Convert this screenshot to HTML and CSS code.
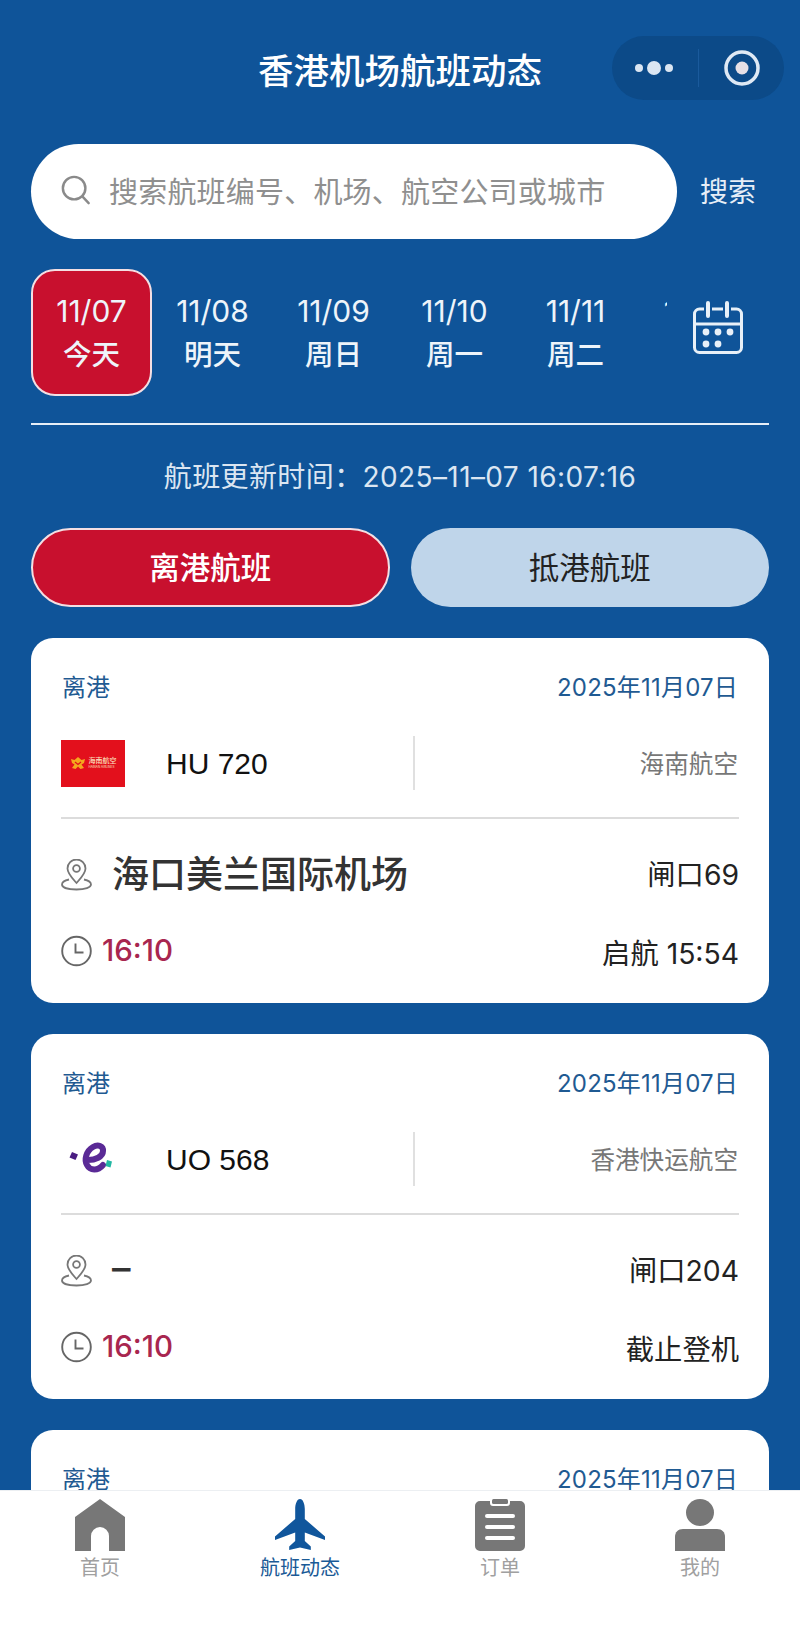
FILE: index.html
```html
<!DOCTYPE html>
<html lang="zh-CN">
<head>
  <meta charset="UTF-8" />
  <meta name="viewport" content="width=device-width, initial-scale=1.0"/>
  <title>香港机场航班动态</title>
  <link rel="stylesheet" href="styles.css">
</head>
<body>

<header class="topbar">
  香港机场航班动态
  <div class="capsule">
    <svg class="capsule-more" viewBox="0 0 44 16">
      <circle cx="7" cy="8" r="4"/>
      <circle cx="22" cy="8" r="7"/>
      <circle cx="37" cy="8" r="4"/>
    </svg>
    <span class="capsule-line"></span>
    <svg class="capsule-close" viewBox="0 0 38 38">
      <circle cx="19" cy="19" r="16" fill="none" stroke="#dfe9f5" stroke-width="3.5"/>
      <circle cx="19" cy="19" r="6.5" fill="#e6e0e6"/>
    </svg>
  </div>
</header>

<div class="search-row">
  <div class="search-box">
    <svg class="search-icon" viewBox="0 0 32 32">
      <circle cx="14" cy="14" r="12" fill="none" stroke="#8a8a8a" stroke-width="2.6"/>
      <path d="M23 23l6.5 7" fill="none" stroke="#8a8a8a" stroke-width="2.6" stroke-linecap="round"/>
    </svg>
    <span class="search-hint">搜索航班编号、机场、航空公司或城市</span>
  </div>
  <span class="search-btn">搜索</span>
</div>

<div class="date-row">
  <div class="date-list">
    <div class="date-item active"><span class="date-num">11/07</span><span>今天</span></div>
    <div class="date-item"><span class="date-num">11/08</span><span>明天</span></div>
    <div class="date-item"><span class="date-num">11/09</span><span>周日</span></div>
    <div class="date-item"><span class="date-num">11/10</span><span>周一</span></div>
    <div class="date-item"><span class="date-num">11/11</span><span>周二</span></div>
    <div class="date-item"><span class="date-num">11/12</span><span>周三</span></div>
  </div>
  <svg class="calendar" viewBox="0 0 50 53">
    <rect x="1.5" y="8" width="47" height="43.5" rx="5" fill="none" stroke="#e8f0f8" stroke-width="3"/>
    <path d="M1.5 23h47" stroke="#e8f0f8" stroke-width="3"/>
    <rect x="11" y="1" width="8" height="16" rx="4" fill="#0f5499"/>
    <rect x="30" y="1" width="8" height="16" rx="4" fill="#0f5499"/>
    <path d="M15 2v13M34 2v13" stroke="#e8f0f8" stroke-width="4" stroke-linecap="round"/>
    <g fill="#e8f0f8">
      <circle cx="13" cy="31" r="3.4"/>
      <circle cx="25" cy="31" r="3.4"/>
      <circle cx="37" cy="31" r="3.4"/>
      <circle cx="13" cy="43" r="3.4"/>
      <circle cx="25" cy="43" r="3.4"/>
    </g>
  </svg>
</div>

<div class="row-line"></div>

<p class="update-time">航班更新时间：2025–11–07 16:07:16</p>

<div class="tabs">
  <div class="tab active">离港航班</div>
  <div class="tab">抵港航班</div>
</div>

<main class="cards">
  <section class="card">
    <div class="card-head"><span>离港</span><span class="card-date">2025年11月07日</span></div>
    <div class="flight">
      <div class="logo-hainan">
        <svg viewBox="0 0 16 14">
          <path d="M1 3l3.5 1L8 1l3.5 3L15 3l-1 4-2.5 1.5L14 12l-3.5 1L8 10.5 5.5 13 2 12l2.500-3.500L2 7z" fill="#f4a81e"/>
          <path d="M5 6l3 2.500L11 6" fill="none" stroke="#e3101c" stroke-width="1.200"/>
        </svg>
        <div class="logo-text"><b>海南航空</b><i>HAINAN AIRLINES</i></div>
      </div>
      <div class="flight-no">HU 720</div>
      <div class="airline">海南航空</div>
    </div>
    <div class="card-line"></div>
    <div class="place">
      <svg class="icon" viewBox="0 0 31 32">
        <path d="M15.5 24C11 19 6.5 14.5 6.5 9.5a9 9 0 0 1 18 0C24.500 14.500 20 19 15.500 24z" fill="none" stroke="#777" stroke-width="1.800"/>
        <circle cx="15.500" cy="9.500" r="3.400" fill="none" stroke="#777" stroke-width="1.800"/>
        <path d="M8 20.500C3.500 21.500 1 23.500 1 25.500c0 3 6 5 14.500 5s14.500-2 14.500-5c0-2-2.500-4-7-5" fill="none" stroke="#777" stroke-width="1.800"/>
      </svg>
      <span class="place-name">海口美兰国际机场</span>
      <span class="gate">闸口69</span>
    </div>
    <div class="times">
      <svg class="icon" viewBox="0 0 31 31">
        <circle cx="15.500" cy="15.500" r="14.300" fill="none" stroke="#666" stroke-width="1.900"/>
        <path d="M14.500 8v9h8" fill="none" stroke="#666" stroke-width="1.900"/>
      </svg>
      <span class="time">16:10</span>
      <span class="status">启航 15:54</span>
    </div>
  </section>

  <section class="card">
    <div class="card-head"><span>离港</span><span class="card-date">2025年11月07日</span></div>
    <div class="flight">
      <svg class="logo-express" viewBox="0 0 64 48">
        <path d="M11 17l6 2.500-2.500 5.500-6-2.500z" fill="#4a1d82"/>
        <path d="M27 25c7 0 15-3 15-9 .4-5-5-7-10-4-7 4-9 13-6 18 3 6 11 6 16 0" fill="none" stroke="#5a2a96" stroke-width="6" stroke-linecap="round"/>
        <path d="M46 25l5 1.500-1.500 6-5-1.500z" fill="#22b8a4"/>
      </svg>
      <div class="flight-no">UO 568</div>
      <div class="airline">香港快运航空</div>
    </div>
    <div class="card-line"></div>
    <div class="place">
      <svg class="icon" viewBox="0 0 31 32">
        <path d="M15.500 24C11 19 6.500 14.500 6.500 9.500a9 9 0 0 1 18 0C24.500 14.500 20 19 15.500 24z" fill="none" stroke="#777" stroke-width="1.800"/>
        <circle cx="15.500" cy="9.500" r="3.400" fill="none" stroke="#777" stroke-width="1.800"/>
        <path d="M8 20.500C3.500 21.500 1 23.500 1 25.500c0 3 6 5 14.500 5s14.500-2 14.500-5c0-2-2.500-4-7-5" fill="none" stroke="#777" stroke-width="1.800"/>
      </svg>
      <span class="place-name">–</span>
      <span class="gate">闸口204</span>
    </div>
    <div class="times">
      <svg class="icon" viewBox="0 0 31 31">
        <circle cx="15.500" cy="15.500" r="14.300" fill="none" stroke="#666" stroke-width="1.900"/>
        <path d="M14.500 8v9h8" fill="none" stroke="#666" stroke-width="1.900"/>
      </svg>
      <span class="time">16:10</span>
      <span class="status">截止登机</span>
    </div>
  </section>

  <section class="card">
    <div class="card-head"><span>离港</span><span class="card-date">2025年11月07日</span></div>
  </section>
</main>

<nav class="tabbar">
  <div class="nav-item">
    <svg viewBox="0 0 52 52"><path d="M26 0l25 18v34H35V37a9 9 0 0 0-18 0v15H1V18z" fill="#777"/></svg>
    <span>首页</span>
  </div>
  <div class="nav-item current">
    <svg viewBox="0 0 52 52"><path d="M26 0c3 0 4.800 5 4.800 10v10L51 37.500v3.500L30.800 33.500V42l6 5.500V51L26 48.500 15.200 51v-3.500l6-5.500v-8.500L1 41v-3.500L21.200 20V10C21.200 5 23 0 26 0z" fill="#10569c"/></svg>
    <span>航班动态</span>
  </div>
  <div class="nav-item">
    <svg viewBox="0 0 52 52">
      <path d="M6 2h10v2a3 3 0 0 0 3 3h14a3 3 0 0 0 3-3V2h10a5 5 0 0 1 5 5v40a5 5 0 0 1-5 5H6a5 5 0 0 1-5-5V7a5 5 0 0 1 5-5z" fill="#777"/>
      <rect x="18" y="0" width="16" height="5" rx="1.500" fill="#777"/>
      <g fill="#fff"><rect x="11" y="15" width="30" height="4" rx="2"/><rect x="11" y="26" width="30" height="4" rx="2"/><rect x="11" y="37" width="30" height="4" rx="2"/></g>
    </svg>
    <span>订单</span>
  </div>
  <div class="nav-item">
    <svg viewBox="0 0 52 52">
      <ellipse cx="26" cy="13.500" rx="14" ry="13.500" fill="#777"/>
      <path d="M9 30h34c5 0 8 3 8 8v14H1V38c0-5 3-8 8-8z" fill="#777"/>
    </svg>
    <span>我的</span>
  </div>
</nav>

</body>
</html>
```

FILE: styles.css
```css
body {
  font-family: Inter, "Noto Sans CJK SC", sans-serif;
  background: #0f5499;
  margin: 0;
  height: 1625px;
  overflow: hidden;
  position: relative;
  color: #222;
}

.topbar {
  height: 136px;
  display: flex;
  align-items: center;
  justify-content: center;
  color: white;
  font-size: 35.5px;
  font-weight: 500;
}

.capsule {
  position: absolute;
  left: 612px;
  top: 36px;
  width: 172px;
  height: 64px;
  border-radius: 32px;
  background: #0c4a88;
  display: flex;
  align-items: center;
}

.capsule-more {
  width: 44px;
  height: 16px;
  margin-left: 20px;
  fill: #dbe6f2;
}

.capsule-line {
  width: 1px;
  height: 38px;
  margin-left: 22px;
  background: #1a5a9c;
}

.capsule-close {
  width: 38px;
  height: 38px;
  margin-left: 24px;
}

.search-row {
  margin: 8px 31px 0;
  height: 95px;
  display: flex;
  align-items: center;
}

.search-box {
  width: 646px;
  height: 95px;
  border-radius: 48px;
  background: white;
  display: flex;
  align-items: center;
  padding-left: 30px;
  padding-bottom: 3px;
  box-sizing: border-box;
}

.search-icon {
  width: 30px;
  height: 30px;
  margin-right: 18px;
}

.search-hint {
  font-size: 29px;
  color: #8f8f8f;
  letter-spacing: .2px;
}

.search-btn {
  margin-left: 23px;
  margin-top: -3px;
  font-size: 28px;
  color: #e6eef7;
}

.date-row {
  margin: 30px 0 0 31px;
  height: 127px;
  display: flex;
  align-items: center;
}

.date-list {
  width: 636px;
  height: 127px;
  overflow: hidden;
  display: flex;
  flex-shrink: 0;
}

.date-item {
  width: 121px;
  height: 127px;
  flex-shrink: 0;
  box-sizing: border-box;
  padding-top: 1px;
  display: flex;
  flex-direction: column;
  align-items: center;
  justify-content: center;
  gap: 4px;
  color: #eef4fa;
  font-size: 28.5px;
  font-weight: 500;
  line-height: 39px;
  border: 2px solid transparent;
  border-radius: 24px;
}

.date-num {
  font-size: 30px;
  font-weight: 400;
}

.date-item.active {
  background: #c8102e;
  border-color: #f4dfe3;
}

.calendar {
  width: 50px;
  height: 53px;
  margin: -11px 0 0 26px;
}

.row-line {
  margin: 27px 31px 0;
  height: 2px;
  background: #e6eef7;
}

.update-time {
  margin: 32px 0 0;
  text-align: center;
  color: #dbe6f2;
  font-size: 28px;
  line-height: 40px;
  letter-spacing: .4px;
}

.tabs {
  margin: 31px 31px 0;
  display: flex;
  gap: 21px;
}

.tab {
  flex: 1;
  height: 79px;
  box-sizing: border-box;
  padding-bottom: 3px;
  border: 2px solid transparent;
  border-radius: 40px;
  background: #bfd5ea;
  color: #222;
  font-size: 30.5px;
  display: flex;
  align-items: center;
  justify-content: center;
}

.tab.active {
  background: #c8102e;
  border-color: #f4dfe3;
  color: white;
  font-weight: 500;
}

.cards {
  margin: 31px 31px 0;
  height: 987px;
  overflow: hidden;
  display: flex;
  flex-direction: column;
  gap: 31px;
}

.card {
  height: 365px;
  flex-shrink: 0;
  box-sizing: border-box;
  padding: 30px 30px 0;
  background: white;
  border-radius: 22px;
}

.card-head {
  display: flex;
  justify-content: space-between;
  padding-left: 1px;
  line-height: 40px;
  font-size: 24px;
  color: #1f5a92;
}

.card-date {
  padding-right: 1px;
  font-size: 24px;
  letter-spacing: .2px;
}

.flight {
  margin-top: 28px;
  height: 54px;
  display: flex;
  align-items: center;
}

.logo-hainan {
  width: 64px;
  height: 47px;
  flex-shrink: 0;
  background: #e3101c;
  display: flex;
  align-items: center;
  justify-content: center;
  gap: 3px;
}

.logo-hainan svg {
  width: 16px;
  height: 14px;
}

.logo-text {
  display: flex;
  flex-direction: column;
  color: #fbe3c0;
  font-size: 7px;
  line-height: 8px;
}

.logo-text b {
  font-weight: 500;
}

.logo-text i {
  font-size: 3px;
  line-height: 4px;
  font-style: normal;
}

.logo-express {
  width: 64px;
  height: 48px;
  flex-shrink: 0;
}

.flight-no {
  margin-left: 41px;
  width: 249px;
  height: 54px;
  box-sizing: border-box;
  border-right: 2px solid #e0e0e0;
  font-family: "Liberation Sans", sans-serif;
  font-size: 30px;
  line-height: 56px;
  color: #111;
  flex-shrink: 0;
}

.airline {
  margin-left: auto;
  margin-top: -2px;
  padding-right: 1px;
  font-size: 24.6px;
  color: #777;
}

.card-line {
  margin-top: 27px;
  height: 2px;
  background: #dcdcdc;
}

.place {
  margin-top: 33px;
  height: 44px;
  display: flex;
  align-items: center;
}

.icon {
  width: 31px;
  height: 32px;
  margin-top: 1px;
  flex-shrink: 0;
}

.place-name {
  margin-left: 20px;
  margin-top: -5px;
  font-size: 37px;
  font-weight: 500;
  color: #333;
}

.gate {
  margin-left: auto;
  margin-top: -4px;
  font-size: 28.3px;
  color: #222;
}

.times {
  margin-top: 34px;
  height: 40px;
  display: flex;
  align-items: center;
}

.time {
  margin-left: 10px;
  font-size: 29.5px;
  font-weight: 500;
  color: #a8264f;
}

.status {
  margin-left: auto;
  margin-top: 2px;
  font-size: 28.3px;
  color: #222;
}

.tabbar {
  position: absolute;
  left: 0;
  right: 0;
  top: 1490px;
  height: 135px;
  background: white;
  border-top: 1px solid #eceff2;
  box-sizing: border-box;
  display: flex;
}

.nav-item {
  width: 200px;
  display: flex;
  flex-direction: column;
  align-items: center;
  padding-top: 8px;
  font-size: 20px;
  line-height: 28px;
  color: #a0a0a0;
}

.nav-item svg {
  width: 52px;
  height: 52px;
  margin-bottom: 3px;
}

.nav-item.current {
  color: #1a5a96;
}
```
